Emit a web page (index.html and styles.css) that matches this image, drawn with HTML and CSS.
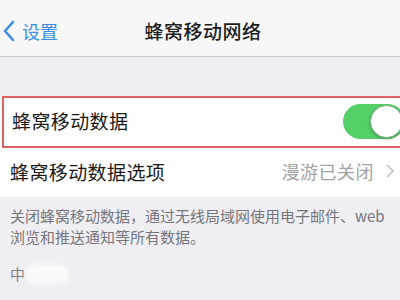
FILE: index.html
```html
<!DOCTYPE html>
<html>
<head>
<meta charset="utf-8">
<link rel="stylesheet" href="styles.css">
</head>
<body>
<div class="screen">
  <header class="nav">
    <div class="back">
      <svg class="chev" width="12" height="22" viewBox="0 0 12 22"><path d="M10 2 L2 11 L10 20" fill="none" stroke="#3b8fe3" stroke-width="2.6" stroke-linecap="round" stroke-linejoin="round"/></svg>
      <span class="back-text">设置</span>
    </div>
    <div class="title">蜂窝移动网络</div>
  </header>
  <div class="gap"></div>
  <section class="group">
    <div class="row row-hl">
      <span class="label">蜂窝移动数据</span>
      <div class="toggle"><div class="knob"></div></div>
    </div>
    <div class="row">
      <span class="label">蜂窝移动数据选项</span>
      <span class="value">漫游已关闭</span>
      <svg class="arrow" width="8" height="14" viewBox="0 0 8 14"><path d="M1 1 L7 7 L1 13" fill="none" stroke="#c4c4c8" stroke-width="1.6"/></svg>
    </div>
  </section>
  <p class="note">关闭蜂窝移动数据，通过无线局域网使用电子邮件、web 浏览和推送通知等所有数据。</p>
  <div class="sub"><span>中</span><span class="blur"></span></div>
</div>
</body>
</html>
```

FILE: styles.css
```css
* { box-sizing: border-box; }
html, body { margin: 0; padding: 0; }
body {
  width: 400px; height: 300px; overflow: hidden;
  background: #efeff3;
  font-family: "Noto Sans CJK SC", "Noto Sans", sans-serif;
}
.screen { display: flex; flex-direction: column; }
.nav {
  height: 57px;
  background: #f7f7f8;
  border-bottom: 1px solid #c9c9cc;
  position: relative;
  display: flex; align-items: center; justify-content: center;
  padding-top: 4px;
}
.back {
  position: absolute; left: 3px; top: 20px;
  display: flex; align-items: center; gap: 7px;
}
.back-text { color: #3b8fe3; font-size: 18px; line-height: 22px; }
.title { font-size: 19px; color: #1e1e1e; font-weight: 500; letter-spacing: 0.5px; margin-left: 6px; }
.gap { height: 39px; }
.group { background: #fff; }
.row {
  height: 49px;
  display: flex; align-items: center;
  padding: 0 10px 3px 10px;
  border-bottom: 1px solid #dcdce0;
  font-size: 19px; color: #1a1a1a;
}
.row:last-child { border-bottom: none; }
.row-hl {
  height: 52px;
  border: 2px solid #df6364;
  padding-left: 8px;
  margin-left: 2px;
  margin-right: -4px;
  position: relative;
}
.label { flex: 1; letter-spacing: 0.4px; }
.value { color: #a3a3a7; font-size: 18px; margin-right: 12px; letter-spacing: 0.5px; }
.arrow { margin-right: -4px; }
.toggle {
  width: 62px; height: 35px; border-radius: 18px;
  background: #55cf67;
  position: relative; margin-right: -13px; margin-top: 2px;
}
.knob {
  position: absolute; right: 2px; top: 1px;
  width: 33px; height: 33px; border-radius: 50%;
  background: #fff;
  box-shadow: 0 1px 3px rgba(0,0,0,0.3);
  border: 1px solid #7fb68a;
}
.note {
  margin: 0; padding: 8px 10px 0 10px;
  font-size: 15px; line-height: 21px; color: #76767a;
}
.sub {
  padding: 16px 10px 0 10px;
  font-size: 15px; color: #808085;
  display: flex; align-items: center;
}
.blur {
  width: 44px; height: 20px; background: #fafafb;
  border-radius: 10px; filter: blur(2px);
}
```
